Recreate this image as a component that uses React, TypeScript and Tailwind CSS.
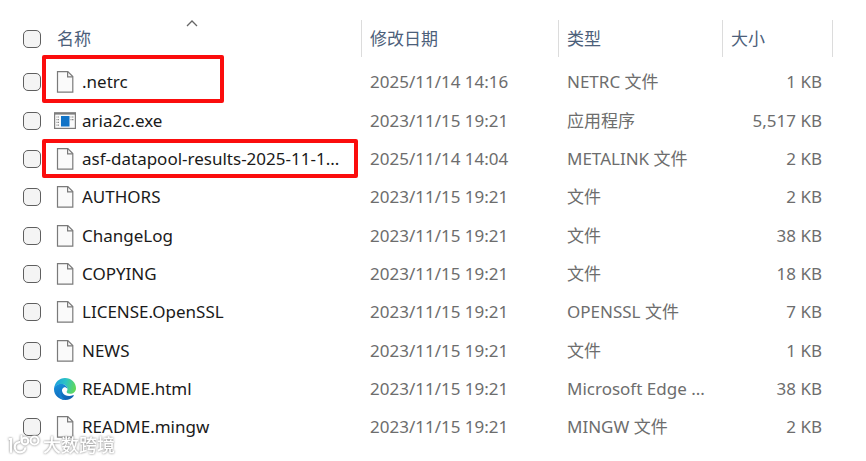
import { useState } from 'react';

type FileKind = 'doc' | 'exe' | 'edge';

interface FileEntry {
  name: string;
  modified: string;
  type: string;
  size: string;
  kind: FileKind;
  mark?: string;
}

const files: FileEntry[] = [
  { name: '.netrc', modified: '2025/11/14 14:16', type: 'NETRC 文件', size: '1 KB', kind: 'doc', mark: '-top-2 -bottom-0.5 w-[182px]' },
  { name: 'aria2c.exe', modified: '2023/11/15 19:21', type: '应用程序', size: '5,517 KB', kind: 'exe' },
  { name: 'asf-datapool-results-2025-11-1...', modified: '2025/11/14 14:04', type: 'METALINK 文件', size: '2 KB', kind: 'doc', mark: '-top-px bottom-0 right-1' },
  { name: 'AUTHORS', modified: '2023/11/15 19:21', type: '文件', size: '2 KB', kind: 'doc' },
  { name: 'ChangeLog', modified: '2023/11/15 19:21', type: '文件', size: '38 KB', kind: 'doc' },
  { name: 'COPYING', modified: '2023/11/15 19:21', type: '文件', size: '18 KB', kind: 'doc' },
  { name: 'LICENSE.OpenSSL', modified: '2023/11/15 19:21', type: 'OPENSSL 文件', size: '7 KB', kind: 'doc' },
  { name: 'NEWS', modified: '2023/11/15 19:21', type: '文件', size: '1 KB', kind: 'doc' },
  { name: 'README.html', modified: '2023/11/15 19:21', type: 'Microsoft Edge ...', size: '38 KB', kind: 'edge' },
  { name: 'README.mingw', modified: '2023/11/15 19:21', type: 'MINGW 文件', size: '2 KB', kind: 'doc' },
];

function FileIcon({ kind }: { kind: FileKind }) {
  if (kind === 'exe') {
    return (
      <svg width="22" height="22" viewBox="0 0 22 22" className="shrink-0">
        <rect x="0.6" y="3" width="20.800" height="15.400" fill="#fafafa" stroke="#7d7d7d" strokeWidth="1.200" />
        <rect x="0" y="2.400" width="22" height="2.200" fill="#7d7d7d" />
        <rect x="7" y="6" width="8.500" height="10.500" fill="#1173c7" />
        <path d="M2.500 7h3M2.500 9.700h3M2.500 12.400h3M2.500 15.100h3M16.500 7h3.500M16.500 9.700h3.500" stroke="#8a8a8a" strokeWidth="1.200" strokeDasharray="1 0.500" />
      </svg>
    );
  }

  if (kind === 'edge') {
    return (
      <svg width="22" height="22" viewBox="0 0 22 22" className="shrink-0">
        <defs>
          <linearGradient id="edgeTop" x1="0" y1="0.300" x2="1" y2="0.500">
            <stop offset="0" stopColor="#1b9fe0" />
            <stop offset="0.500" stopColor="#2cc3c4" />
            <stop offset="1" stopColor="#62d957" />
          </linearGradient>
          <linearGradient id="edgeBase" x1="0" y1="0" x2="0.500" y2="1">
            <stop offset="0" stopColor="#1795df" />
            <stop offset="1" stopColor="#0f62b4" />
          </linearGradient>
        </defs>
        <path d="M9 9.500h8l4.800 1.500c-.5 3-2.600 5.200-6 5.400-3.800.3-6.500-1.400-7.300-3.500Z" fill="#fff" />
        <path d="M0.200 10C0.800 4.300 5.300 0 11 0c6.200 0 11 4.600 11 10.200 0 3.400-2.700 5.600-5.800 5.600-2.400 0-3.600-.9-3.600-1.700s.9-1.200.9-3C13.500 8.200 10.800 6 7.400 6 4.200 6 1.500 7.500 0.200 10Z" fill="url(#edgeTop)" />
        <path d="M0 11.300C0 8 3.200 6 7.200 6c3.500 0 6.200 2.100 6.300 5-.9-1.400-2.300-2-3.700-1.600-1.600.6-2.200 2.500-1.500 4.600 1.300 3.500 6.400 5 10.600 3.300.9-.3 1.300.1.800.8C17.700 20.600 14.800 22 11.300 22 5 22 0 17.200 0 11.300Z" fill="url(#edgeBase)" />
        <path d="M8.500 10.200c-3.200 3.600-1.900 9.100 3.300 11.700-4.800.3-7.300-2.800-7.300-6.400 0-2.600 1.500-4.600 4-5.300Z" fill="#147fcf" />
      </svg>
    );
  }

  return (
    <svg width="22" height="22" viewBox="0 0 22 22" className="shrink-0">
      <path d="M3.500 0.600h10.300l5 5v15.600H3.500Z" fill="#fafafa" stroke="#7a7a7a" strokeWidth="1.200" />
      <path d="M13.600 0.600v5.200h5.200" fill="none" stroke="#7a7a7a" strokeWidth="1.200" />
    </svg>
  );
}

interface TickProps {
  label: string;
  checked: boolean;
  onChange: () => void;
}

function Tick({ label, checked, onChange }: TickProps) {
  return (
    <input
      type="checkbox"
      aria-label={label}
      checked={checked}
      onChange={onChange}
      className="block size-[18px] appearance-none rounded-[5px] border border-[#5f5f5f] bg-[#f4f4f4] checked:bg-[#0067c0]"
    />
  );
}

function Watermark() {
  return (
    <div className="pointer-events-none absolute bottom-1 left-2 flex items-center gap-0.5 drop-shadow-[0_0_1px_#777]">
      <svg width="33" height="22" viewBox="0 0 33 22" fill="none" stroke="#fff" strokeWidth="2.200" strokeLinecap="round">
        <path d="M1.500 5h1.500v13" />
        <path d="M11.500 8c-3 .6-4.800 2.600-4.800 5 0 3 2.400 5.300 5.300 5.300 2.600 0 4.700-1.600 5.300-4" />
        <path d="M13.500 2v5" />
        <circle cx="17" cy="7" r="3.300" />
        <circle cx="26.500" cy="6.500" r="4" />
      </svg>
      <span className="text-lg leading-6 font-medium text-white">大数跨境</span>
    </div>
  );
}

export default function App() {
  const [selected, setSelected] = useState<string[]>([]);
  const allSelected = selected.length === files.length;

  const toggle = (name: string) => {
    setSelected((prev) =>
      prev.includes(name) ? prev.filter((n) => n !== name) : [...prev, name]
    );
  };

  return (
    <main className="relative min-h-screen bg-white pt-5 pr-[33px] font-['Noto_Sans','Noto_Sans_CJK_SC',sans-serif] text-[17px] leading-6 whitespace-nowrap text-[#6d6d6d]">
      <table className="w-full table-fixed border-collapse">
        <colgroup>
          <col className="w-[42px]" />
          <col />
          <col className="w-[197px]" />
          <col className="w-[164px]" />
          <col className="w-[110px]" />
        </colgroup>
        <thead className="text-left text-[#4c607a]">
          <tr className="h-[43px] align-top">
            <th className="p-0 pl-[23px] font-normal">
              <div className="flex h-[37px] items-center">
                <Tick
                  label="全选"
                  checked={allSelected}
                  onChange={() => setSelected(allSelected ? [] : files.map((f) => f.name))}
                />
              </div>
            </th>
            <th className="relative p-0 font-normal" aria-sort="ascending">
              <div className="flex h-[37px] items-center border-r border-[#dcdcdc] pl-[15px]">名称</div>
              <svg width="12" height="7" viewBox="0 0 12 7" className="absolute top-0 left-36" fill="none" stroke="#666" strokeWidth="1.300">
                <path d="M1 6l5-5 5 5" />
              </svg>
            </th>
            {['修改日期', '类型', '大小'].map((title) => (
              <th key={title} className="p-0 font-normal">
                <div className="flex h-[37px] items-center border-r border-[#dcdcdc] pl-2">{title}</div>
              </th>
            ))}
          </tr>
        </thead>
        <tbody>
          {files.map((file) => (
            <tr key={file.name} className="h-[38px] nth-[3n+2]:h-[39px]">
              <td className="p-0 pl-[23px]">
                <Tick
                  label={file.name}
                  checked={selected.includes(file.name)}
                  onChange={() => toggle(file.name)}
                />
              </td>
              <td className="relative p-0 text-[#1a1a1a]">
                <div className="flex items-center gap-[6px] pl-3">
                  <FileIcon kind={file.kind} />
                  {file.name}
                </div>
                {file.mark && (
                  <span className={`pointer-events-none absolute left-0 rounded-xs border-4 border-[#fb0d0d] ${file.mark}`} />
                )}
              </td>
              <td className="p-0 pl-2">{file.modified}</td>
              <td className="p-0 pl-2">{file.type}</td>
              <td className="p-0 pr-[11px] text-right">{file.size}</td>
            </tr>
          ))}
        </tbody>
      </table>
      <Watermark />
    </main>
  );
}
